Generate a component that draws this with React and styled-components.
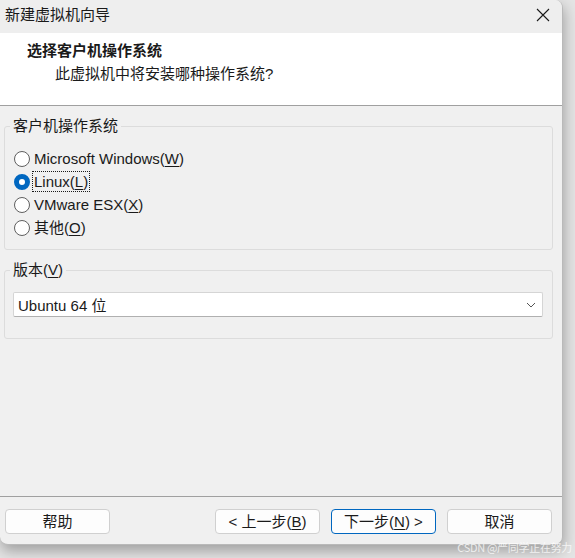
import React from 'react';
import styled, { createGlobalStyle } from 'styled-components';

const GlobalStyle = createGlobalStyle`
  html, body {
    margin: 0;
    padding: 0;
    background: #e4e4e4;
    width: 575px;
    height: 558px;
    overflow: hidden;
  }
  body {
    font-family: "Liberation Sans", "Noto Sans CJK SC", sans-serif;
    font-size: 15px;
    color: #1a1a1a;
  }
`;

const Stage = styled.div`
  position: relative;
  width: 575px;
  height: 558px;
`;

const Window = styled.div`
  width: 563px;
  height: 545px;
  background: #f0f0f0;
  border-right: 1px solid #b9b9b9;
  border-bottom: 1px solid #b9b9b9;
  border-radius: 0 8px 8px 8px;
  box-shadow: 1px 6px 14px rgba(0, 0, 0, 0.3);
  display: flex;
  flex-direction: column;
  overflow: hidden;
  box-sizing: border-box;
`;

const TitleBar = styled.div`
  height: 33px;
  flex: none;
  background: #eeeeee;
  display: flex;
  align-items: center;
  justify-content: space-between;
  padding: 0 12px 4px 5px;
  box-sizing: border-box;
`;

const TitleText = styled.span`
  font-size: 15px;
  line-height: 20px;
`;

const CloseIcon = styled.svg`
  width: 14px;
  height: 14px;
  display: block;
`;

const Header = styled.div`
  flex: none;
  height: 73px;
  background: #ffffff;
  border-bottom: 1px solid #a0a0a0;
  box-sizing: border-box;
  padding: 8px 0 0 27px;
  display: flex;
  flex-direction: column;
  gap: 3px;
`;

const HeaderTitle = styled.div`
  font-weight: bold;
  line-height: 20px;
`;

const HeaderSub = styled.div`
  line-height: 20px;
  padding-left: 28px;
`;

const Content = styled.div`
  flex: 1;
  display: flex;
  flex-direction: column;
`;

const Group = styled.fieldset`
  margin: 10px 9px 0 4px;
  padding: 0;
  border: 1px solid #dcdcdc;
  border-radius: 3px;
  min-width: 0;
`;

const Legend = styled.legend`
  margin-left: 5px;
  padding: 0 3px;
  line-height: 20px;
`;

const GroupBody = styled.div`
  padding: ${p => p.$padTop}px 9px ${p => p.$padBottom}px ${p => p.$padLeft}px;
`;

const RadioRow = styled.label`
  display: flex;
  align-items: center;
  height: 23px;
  gap: 4px;
`;

const RadioCircle = styled.span`
  width: 16px;
  height: 16px;
  border-radius: 50%;
  box-sizing: border-box;
  flex: none;
  border: ${p => (p.$checked ? '5px solid #0067c0' : '1px solid #5f5f5f')};
  background: #ffffff;
`;

const RadioText = styled.span`
  line-height: 19px;
  padding: 0 1px;
  border: 1px dotted ${p => (p.$focused ? '#1a1a1a' : 'transparent')};
  margin-left: -2px;
`;

const Key = styled.span`
  text-decoration: underline;
  text-underline-offset: 2px;
`;

const Select = styled.div`
  height: 25px;
  background: #ffffff;
  border: 1px solid #d5d5d5;
  border-bottom-color: #b0b0b0;
  border-radius: 2px;
  box-sizing: border-box;
  display: flex;
  align-items: center;
  justify-content: space-between;
  padding: 0 6px 0 4px;
`;

const Chevron = styled.svg`
  width: 10px;
  height: 6px;
  display: block;
`;

const Footer = styled.div`
  flex: none;
  height: 48px;
  border-top: 1px solid #a0a0a0;
  box-sizing: border-box;
  display: flex;
  justify-content: space-between;
  padding: 12px 10px 0 5px;
`;

const ButtonGroup = styled.div`
  display: flex;
  gap: 11px;
`;

const Button = styled.button`
  width: 105px;
  height: 25px;
  background: #fdfdfd;
  border: 1px solid ${p => (p.$primary ? '#0067c0' : '#d0d0d0')};
  border-radius: 4px;
  font-family: inherit;
  font-size: 15px;
  color: #1a1a1a;
  padding: 0;
  line-height: 20px;
`;

const Watermark = styled.div`
  position: absolute;
  right: 3px;
  bottom: 3px;
  font-size: 11px;
  color: rgba(255, 255, 255, 0.75);
  font-family: "Noto Sans CJK SC", sans-serif;
  letter-spacing: -0.3px;
`;

const options = [
  { label: 'Microsoft Windows', key: 'W' },
  { label: 'Linux', key: 'L', checked: true },
  { label: 'VMware ESX', key: 'X' },
  { label: '其他', key: 'O' },
];

export default function App() {
  return (
    <Stage>
      <GlobalStyle />
      <Window>
        <TitleBar>
          <TitleText>新建虚拟机向导</TitleText>
          <CloseIcon viewBox="0 0 14 14">
            <path d="M1 1L13 13M13 1L1 13" stroke="#1a1a1a" strokeWidth="1.1" fill="none" />
          </CloseIcon>
        </TitleBar>
        <Header>
          <HeaderTitle>选择客户机操作系统</HeaderTitle>
          <HeaderSub>此虚拟机中将安装哪种操作系统?</HeaderSub>
        </Header>
        <Content>
          <Group>
            <Legend>客户机操作系统</Legend>
            <GroupBody $padTop={11} $padBottom={10} $padLeft={9}>
              {options.map(o => (
                <RadioRow key={o.key}>
                  <RadioCircle $checked={o.checked} />
                  <RadioText $focused={o.checked}>
                    {o.label}(<Key>{o.key}</Key>)
                  </RadioText>
                </RadioRow>
              ))}
            </GroupBody>
          </Group>
          <Group>
            <Legend>
              版本(<Key>V</Key>)
            </Legend>
            <GroupBody $padTop={12} $padBottom={21} $padLeft={8}>
              <Select>
                <span>Ubuntu 64 位</span>
                <Chevron viewBox="0 0 10 6">
                  <path d="M1 1L5 5L9 1" stroke="#555" strokeWidth="1" fill="none" />
                </Chevron>
              </Select>
            </GroupBody>
          </Group>
        </Content>
        <Footer>
          <Button>帮助</Button>
          <ButtonGroup>
            <Button>
              &lt; 上一步(<Key>B</Key>)
            </Button>
            <Button $primary>
              下一步(<Key>N</Key>) &gt;
            </Button>
            <Button>取消</Button>
          </ButtonGroup>
        </Footer>
      </Window>
      <Watermark>CSDN @严同学正在努力</Watermark>
    </Stage>
  );
}
